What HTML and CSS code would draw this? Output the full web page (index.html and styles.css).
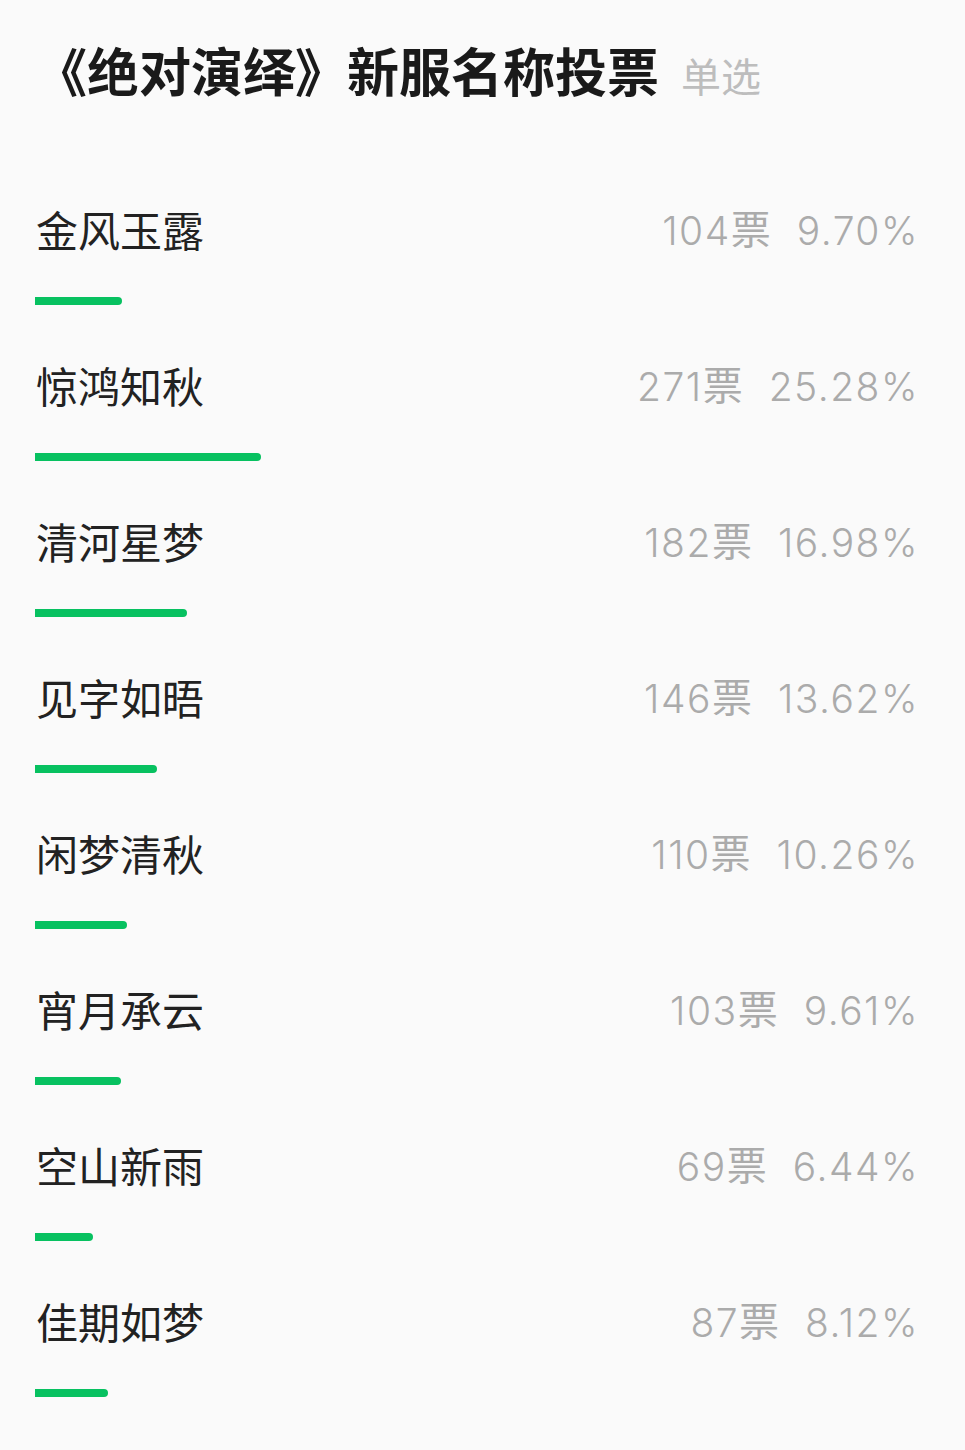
FILE: index.html
```html
<!DOCTYPE html>
<html lang="zh-CN">

<head>
  <meta charset="UTF-8" />
  <meta name="viewport" content="width=device-width, initial-scale=1.0" />
  <title>新服名称投票</title>
  <link rel="stylesheet" href="styles.css">
</head>

<body>
  <div class="poll">
    <h1 class="poll-title">《绝对演绎》新服名称投票<span class="poll-type">单选</span></h1>

    <ul class="options">
      <li class="option">
        <div class="option-head">
          <span class="option-name">金风玉露</span>
          <span class="option-stats"><span class="num">104</span>票<span class="num percent">9.70%</span></span>
        </div>
        <div class="bar" style="width: 9.70%"></div>
      </li>
      <li class="option">
        <div class="option-head">
          <span class="option-name">惊鸿知秋</span>
          <span class="option-stats"><span class="num">271</span>票<span class="num percent">25.28%</span></span>
        </div>
        <div class="bar" style="width: 25.28%"></div>
      </li>
      <li class="option">
        <div class="option-head">
          <span class="option-name">清河星梦</span>
          <span class="option-stats"><span class="num">182</span>票<span class="num percent">16.98%</span></span>
        </div>
        <div class="bar" style="width: 16.98%"></div>
      </li>
      <li class="option">
        <div class="option-head">
          <span class="option-name">见字如晤</span>
          <span class="option-stats"><span class="num">146</span>票<span class="num percent">13.62%</span></span>
        </div>
        <div class="bar" style="width: 13.62%"></div>
      </li>
      <li class="option">
        <div class="option-head">
          <span class="option-name">闲梦清秋</span>
          <span class="option-stats"><span class="num">110</span>票<span class="num percent">10.26%</span></span>
        </div>
        <div class="bar" style="width: 10.26%"></div>
      </li>
      <li class="option">
        <div class="option-head">
          <span class="option-name">宵月承云</span>
          <span class="option-stats"><span class="num">103</span>票<span class="num percent">9.61%</span></span>
        </div>
        <div class="bar" style="width: 9.61%"></div>
      </li>
      <li class="option">
        <div class="option-head">
          <span class="option-name">空山新雨</span>
          <span class="option-stats"><span class="num">69</span>票<span class="num percent">6.44%</span></span>
        </div>
        <div class="bar" style="width: 6.44%"></div>
      </li>
      <li class="option">
        <div class="option-head">
          <span class="option-name">佳期如梦</span>
          <span class="option-stats"><span class="num">87</span>票<span class="num percent">8.12%</span></span>
        </div>
        <div class="bar" style="width: 8.12%"></div>
      </li>
    </ul>
  </div>
</body>

</html>
```

FILE: styles.css
```css
body {
  margin: 0;
  padding: 0;
  background-color: #fafafa;
  color: #222222;
  font-family: 'Noto Sans CJK SC', 'Noto Sans', sans-serif;
}

.poll {
  padding: 41px 35px 0 35px;
}

.poll-title {
  margin: 0 0 101px 0;
  font-size: 52px;
  line-height: 58px;
  font-weight: bold;
  color: #1a1a1a;
}

.poll-type {
  margin-left: 22px;
  font-size: 40px;
  font-weight: normal;
  color: #bdbdbd;
}

.options {
  list-style: none;
  margin: 0;
  padding: 0;
}

.option {
  padding-bottom: 56px;
}

.option-head {
  display: flex;
  justify-content: space-between;
  align-items: center;
  height: 48px;
  margin-bottom: 44px;
  padding-right: 11px;
}

.option-name {
  padding-left: 1px;
  font-size: 42px;
  line-height: 48px;
}

.option-stats {
  font-size: 40px;
  line-height: 48px;
  color: #ababab;
  white-space: nowrap;
}

.num {
  font-family: 'Inter', sans-serif;
  font-size: 39px;
  font-weight: 300;
  letter-spacing: 1.5px;
  vertical-align: -1px;
}

.percent {
  margin-left: 26px;
}

.bar {
  height: 8px;
  background-color: #07c160;
  border-radius: 0 4px 4px 0;
}
```
